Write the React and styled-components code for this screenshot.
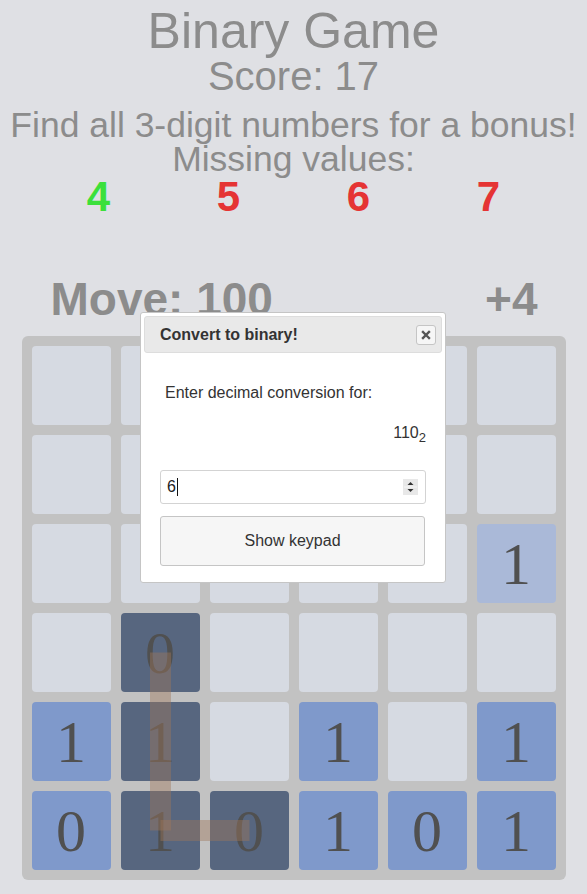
import React from "react";
import styled, { createGlobalStyle } from "styled-components";

const GlobalStyle = createGlobalStyle`
  html, body { margin: 0; padding: 0; }
  body {
    background: #dfe0e4;
    font-family: "Liberation Sans", Arial, sans-serif;
  }
`;

const Page = styled.div`
  position: relative;
  width: 587px;
  min-height: 894px;
  overflow: hidden;
`;

const Header = styled.header`
  text-align: center;
  color: #8c8c8c;
  padding-top: 6px;
`;

const Title = styled.h1`
  margin: 0;
  font-size: 50px;
  line-height: 50px;
  font-weight: normal;
`;

const Score = styled.div`
  font-size: 40px;
  line-height: 40px;
`;

const Hint = styled.div`
  font-size: 35.5px;
  line-height: 34px;
  margin-top: ${(p) => p.$gap || 0}px;
`;

const Missing = styled.div`
  display: flex;
  justify-content: center;
`;

const MissingValue = styled.span`
  width: 130px;
  text-align: center;
  font-size: 42px;
  line-height: 42px;
  font-weight: bold;
  color: ${(p) => (p.$found ? "#3be03b" : "#e53434")};
`;

const StatusRow = styled.div`
  display: flex;
  justify-content: space-between;
  width: 544px;
  box-sizing: border-box;
  margin: 58px auto 0;
  padding: 0 28px 0 29px;
  font-size: 46px;
  line-height: 46px;
  font-weight: bold;
  color: #8c8c8c;
`;

const Board = styled.div`
  position: relative;
  width: 544px;
  height: 544px;
  box-sizing: border-box;
  margin: 14px auto 0;
  padding: 10px;
  background: #c2c2c2;
  border-radius: 6px;
  display: grid;
  grid-template-columns: repeat(6, 1fr);
  grid-template-rows: repeat(6, 1fr);
  gap: 10px;
`;

const cellColors = {
  e: "#d6dae2",
  b: "#7f99cb",
  d: "#57667f",
  p: "#aab9d8",
};

const Cell = styled.div`
  border-radius: 4px;
  background: ${(p) => cellColors[p.$kind]};
  display: flex;
  align-items: center;
  justify-content: center;
  font-family: "Liberation Serif", "Times New Roman", serif;
  font-size: 60px;
  line-height: 1;
  color: #505050;
`;

const PathLayer = styled.svg`
  position: absolute;
  left: 0;
  top: 0;
  width: 544px;
  height: 544px;
  pointer-events: none;
`;

const Dialog = styled.div`
  position: absolute;
  left: 140px;
  top: 312px;
  width: 306px;
  height: 271px;
  box-sizing: border-box;
  padding: 3px;
  background: #ffffff;
  border: 1px solid #c5c5c5;
  border-radius: 3px;
  z-index: 10;
`;

const TitleBar = styled.div`
  height: 37px;
  box-sizing: border-box;
  display: flex;
  align-items: center;
  justify-content: space-between;
  padding: 0 5px 0 15px;
  background: #e9e9e9;
  border: 1px solid #dddddd;
  border-radius: 3px;
  color: #333333;
  font-size: 16px;
  font-weight: bold;
`;

const CloseButton = styled.button`
  width: 20px;
  height: 20px;
  padding: 0;
  margin: 0;
  box-sizing: border-box;
  display: flex;
  align-items: center;
  justify-content: center;
  background: #f6f6f6;
  border: 1px solid #c5c5c5;
  border-radius: 3px;
`;

const Content = styled.div`
  padding: 0 16px;
  color: #333333;
  font-size: 16px;
`;

const Prompt = styled.p`
  margin: 31px 0 0;
  padding-left: 5px;
  line-height: 18px;
`;

const Binary = styled.p`
  margin: 22px 0 0;
  text-align: right;
  line-height: 18px;
  sub {
    font-size: 13px;
    vertical-align: -4px;
    line-height: 0;
  }
`;

const Field = styled.div`
  margin-top: 28px;
  height: 34px;
  box-sizing: border-box;
  display: flex;
  align-items: center;
  padding: 0 7px 0 6px;
  border: 1px solid #d3d3d3;
  border-radius: 3px;
  background: #fff;
  font-size: 16px;
  color: #222;
`;

const FieldValue = styled.span`
  flex: 1;
  display: flex;
  align-items: center;
`;

const Caret = styled.span`
  display: inline-block;
  width: 1px;
  height: 18px;
  margin-left: 1px;
  background: #111;
`;

const KeypadButton = styled.button`
  display: block;
  width: 265px;
  height: 50px;
  margin-top: 12px;
  box-sizing: border-box;
  background: #f6f6f6;
  border: 1px solid #c5c5c5;
  border-radius: 3px;
  font-family: "Liberation Sans", Arial, sans-serif;
  font-size: 16px;
  color: #333333;
`;

const board = [
  ["e", "e", "e", "e", "e", "e"],
  ["e", "e", "e", "e", "e", "e"],
  ["e", "e", "e", "e", "e", "p1"],
  ["e", "d0", "e", "e", "e", "e"],
  ["b1", "d1", "e", "b1", "e", "b1"],
  ["b0", "d1", "d0", "b1", "b0", "b1"],
];

const center = (i) => 10 + i * 89 + 39.5;

export default function App() {
  return (
    <Page>
      <GlobalStyle />
      <Header>
        <Title>Binary Game</Title>
        <Score>Score: 17</Score>
        <Hint $gap={12}>Find all 3-digit numbers for a bonus!</Hint>
        <Hint>Missing values:</Hint>
        <Missing>
          <MissingValue $found>4</MissingValue>
          <MissingValue>5</MissingValue>
          <MissingValue>6</MissingValue>
          <MissingValue>7</MissingValue>
        </Missing>
      </Header>
      <StatusRow>
        <span>Move: 100</span>
        <span>+4</span>
      </StatusRow>
      <Board>
        {board.flat().map((c, i) => (
          <Cell key={i} $kind={c[0]}>
            {c.slice(1)}
          </Cell>
        ))}
        <PathLayer viewBox="0 0 544 544">
          <g stroke="rgba(160,120,90,0.42)" strokeWidth="21" strokeLinecap="butt" fill="none">
            <line x1={center(1)} y1={center(3)} x2={center(1)} y2={center(5)} />
            <line x1={center(1)} y1={center(5)} x2={center(2)} y2={center(5)} />
          </g>
        </PathLayer>
      </Board>
      <Dialog>
        <TitleBar>
          <span>Convert to binary!</span>
          <CloseButton aria-label="close">
            <svg width="10" height="10" viewBox="0 0 10 10">
              <path d="M2 2 L8 8 M8 2 L2 8" stroke="#555" strokeWidth="2.4" strokeLinecap="square" />
            </svg>
          </CloseButton>
        </TitleBar>
        <Content>
          <Prompt>Enter decimal conversion for:</Prompt>
          <Binary>
            110<sub>2</sub>
          </Binary>
          <Field>
            <FieldValue>
              6<Caret />
            </FieldValue>
            <svg width="15" height="16" viewBox="0 0 15 16">
              <rect x="0" y="0" width="15" height="16" fill="#e8e8e8" />
              <line x1="1" y1="8" x2="14" y2="8" stroke="#f8f8f8" strokeWidth="1" />
              <path d="M4.5 6 L7.5 3 L10.5 6 Z" fill="#333" />
              <path d="M4.5 10 L7.5 13 L10.5 10 Z" fill="#333" />
            </svg>
          </Field>
          <KeypadButton>Show keypad</KeypadButton>
        </Content>
      </Dialog>
    </Page>
  );
}
